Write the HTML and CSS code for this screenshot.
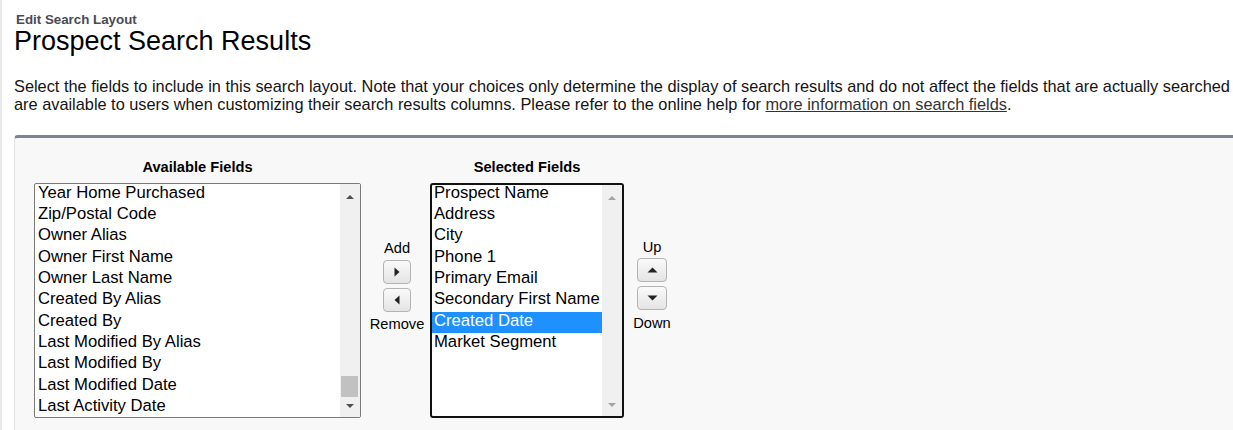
FILE: index.html
```html
<!DOCTYPE html>
<html lang="en">
<head>
  <meta charset="UTF-8">
  <title>Edit Search Layout: Prospect Search Results</title>
  <link rel="stylesheet" href="styles.css">
</head>
<body>
  <div class="page">
    <div class="page-head">
      <div class="page-type">Edit Search Layout</div>
      <h1 class="page-title">Prospect Search Results</h1>
    </div>
    <p class="intro">Select the fields to include in this search layout. Note that your choices only determine the display of search results and do not affect the fields that are actually searched<br>are available to users when customizing their search results columns. Please refer to the online help for <a href="#">more information on search fields</a>.</p>

    <div class="panel">
      <div class="dueling">
        <div class="col">
          <div class="col-label">Available Fields</div>
          <div class="listbox listbox-avail">
            <div class="options">
              <div class="opt">Year Home Purchased</div>
              <div class="opt">Zip/Postal Code</div>
              <div class="opt">Owner Alias</div>
              <div class="opt">Owner First Name</div>
              <div class="opt">Owner Last Name</div>
              <div class="opt">Created By Alias</div>
              <div class="opt">Created By</div>
              <div class="opt">Last Modified By Alias</div>
              <div class="opt">Last Modified By</div>
              <div class="opt">Last Modified Date</div>
              <div class="opt">Last Activity Date</div>
            </div>
            <div class="scrollbar">
              <div class="sb-top"><span class="tri tri-up"></span></div>
              <div class="sb-track"></div>
              <div class="sb-thumb"></div>
              <div class="sb-bottom"><span class="tri tri-down"></span></div>
            </div>
          </div>
        </div>

        <div class="col-buttons col-addremove">
          <div class="btn-label">Add</div>
          <button class="arrow-btn" title="Add">
            <svg width="6" height="10" viewBox="0 0 6 10"><path d="M0.5 0.5 L5.5 5 L0.5 9.5 Z" fill="#222"/></svg>
          </button>
          <button class="arrow-btn" title="Remove">
            <svg width="6" height="10" viewBox="0 0 6 10"><path d="M5.5 0.5 L0.5 5 L5.5 9.5 Z" fill="#222"/></svg>
          </button>
          <div class="btn-label">Remove</div>
        </div>

        <div class="col">
          <div class="col-label">Selected Fields</div>
          <div class="listbox listbox-selected">
            <div class="options">
              <div class="opt">Prospect Name</div>
              <div class="opt">Address</div>
              <div class="opt">City</div>
              <div class="opt">Phone 1</div>
              <div class="opt">Primary Email</div>
              <div class="opt">Secondary First Name</div>
              <div class="opt selected">Created Date</div>
              <div class="opt">Market Segment</div>
            </div>
            <div class="scrollbar scrollbar-idle">
              <div class="sb-top"><span class="tri tri-up"></span></div>
              <div class="sb-track"></div>
              <div class="sb-bottom"><span class="tri tri-down"></span></div>
            </div>
          </div>
        </div>

        <div class="col-buttons col-updown">
          <div class="btn-label">Up</div>
          <button class="arrow-btn" title="Up">
            <svg width="11" height="6" viewBox="0 0 11 6"><path d="M0.5 5.5 L5.5 0.5 L10.5 5.5 Z" fill="#222"/></svg>
          </button>
          <button class="arrow-btn" title="Down">
            <svg width="11" height="6" viewBox="0 0 11 6"><path d="M0.5 0.5 L5.5 5.5 L10.5 0.5 Z" fill="#222"/></svg>
          </button>
          <div class="btn-label">Down</div>
        </div>
      </div>
    </div>
  </div>
</body>
</html>
```

FILE: styles.css
```css
* { box-sizing: border-box; }
body {
  margin: 0;
  height: 430px;
  overflow: hidden;
  background: #fff;
  color: #000;
  font-family: "Liberation Sans", Arial, sans-serif;
}
.page {
  border-left: 2px solid #e8e8e8;
  min-height: 430px;
}

/* header */
.page-head {
  padding: 12px 0 0 14px;
}
.page-type {
  font-size: 13.33px;
  font-weight: bold;
  line-height: 16px;
  color: #4a4a56;
}
.page-title {
  margin: 0 0 0 -2px;
  font-size: 27px;
  font-weight: normal;
  line-height: 26px;
}
.intro {
  margin: 23px 0 21px 12px;
  font-size: 16.33px;
  line-height: 18.4px;
  white-space: nowrap;
  color: #141414;
}
.intro a {
  color: #333;
  text-decoration: underline;
}

/* dueling list boxes */
.panel {
  margin-left: 12px;
  min-height: 320px;
  background: #f8f8f8;
  border-top: 3px solid #7b8398;
  border-left: 1px solid #e2e2e2;
  border-top-left-radius: 4px;
  padding: 21px 0 0 19px;
}
.dueling {
  display: flex;
  align-items: flex-start;
}
.col {
  display: flex;
  flex-direction: column;
  align-items: center;
}
.col-label {
  font-size: 14.67px;
  font-weight: bold;
  line-height: 17px;
  margin-bottom: 7px;
}
.listbox {
  display: flex;
  height: 235px;
  background: #fff;
  overflow: hidden;
}
.listbox-avail {
  width: 327px;
  border: 1px solid #7a7a7a;
  border-radius: 2px;
}
.listbox-avail .opt { padding-left: 3px; }
.listbox-selected {
  width: 194px;
  border: 2px solid #111;
  border-radius: 3px;
}
.listbox-selected .options { margin-top: -1px; }
.options {
  flex: 1;
  min-width: 0;
}
.opt {
  font-size: 16.67px;
  line-height: 18.4px;
  height: 21.33px;
  padding: 0 2px;
  white-space: nowrap;
}
.opt.selected {
  background: #1e90ff;
  color: #fff;
}

/* drawn scrollbar */
.scrollbar {
  width: 20px;
  background: #f0f0f0;
  display: flex;
  flex-direction: column;
  align-items: center;
}
.sb-top { height: 24px; display: flex; align-items: center; padding-top: 2px; }
.sb-track { flex: 1; }
.sb-thumb {
  width: 17px;
  height: 21px;
  background: #c1c1c1;
  margin-left: -2px;
}
.sb-bottom { height: 20px; display: flex; align-items: center; padding-bottom: 1px; }
.tri {
  width: 0;
  height: 0;
  border-left: 4.5px solid transparent;
  border-right: 4.5px solid transparent;
}
.tri-up { border-bottom: 4.5px solid #505050; }
.tri-down { border-top: 4.5px solid #505050; }
.scrollbar-idle .tri-up { border-bottom-color: #a3a3a3; }
.scrollbar-idle .tri-down { border-top-color: #a3a3a3; }

/* add / remove, up / down */
.col-buttons {
  display: flex;
  flex-direction: column;
  align-items: center;
}
.col-addremove { width: 58px; margin: 81px 4px 0 7px; }
.col-updown { width: 40px; margin: 80px 0 0 8px; }
.btn-label {
  font-size: 14.67px;
  line-height: 17px;
}
.arrow-btn {
  width: 28px;
  height: 24px;
  padding: 0;
  margin: 0;
  display: flex;
  align-items: center;
  justify-content: center;
  border: 1px solid #b3b3b3;
  border-radius: 4px;
  background: linear-gradient(#fafafa, #e4e4e4);
  cursor: pointer;
}
.col-updown .arrow-btn { width: 30px; }
.btn-label + .arrow-btn { margin-top: 3px; }
.arrow-btn + .arrow-btn { margin-top: 4px; }
.arrow-btn + .btn-label { margin-top: 4px; }
.col-updown .btn-label + .arrow-btn { margin-top: 2px; }
.col-updown .arrow-btn + .btn-label { margin-top: 5px; }
```
